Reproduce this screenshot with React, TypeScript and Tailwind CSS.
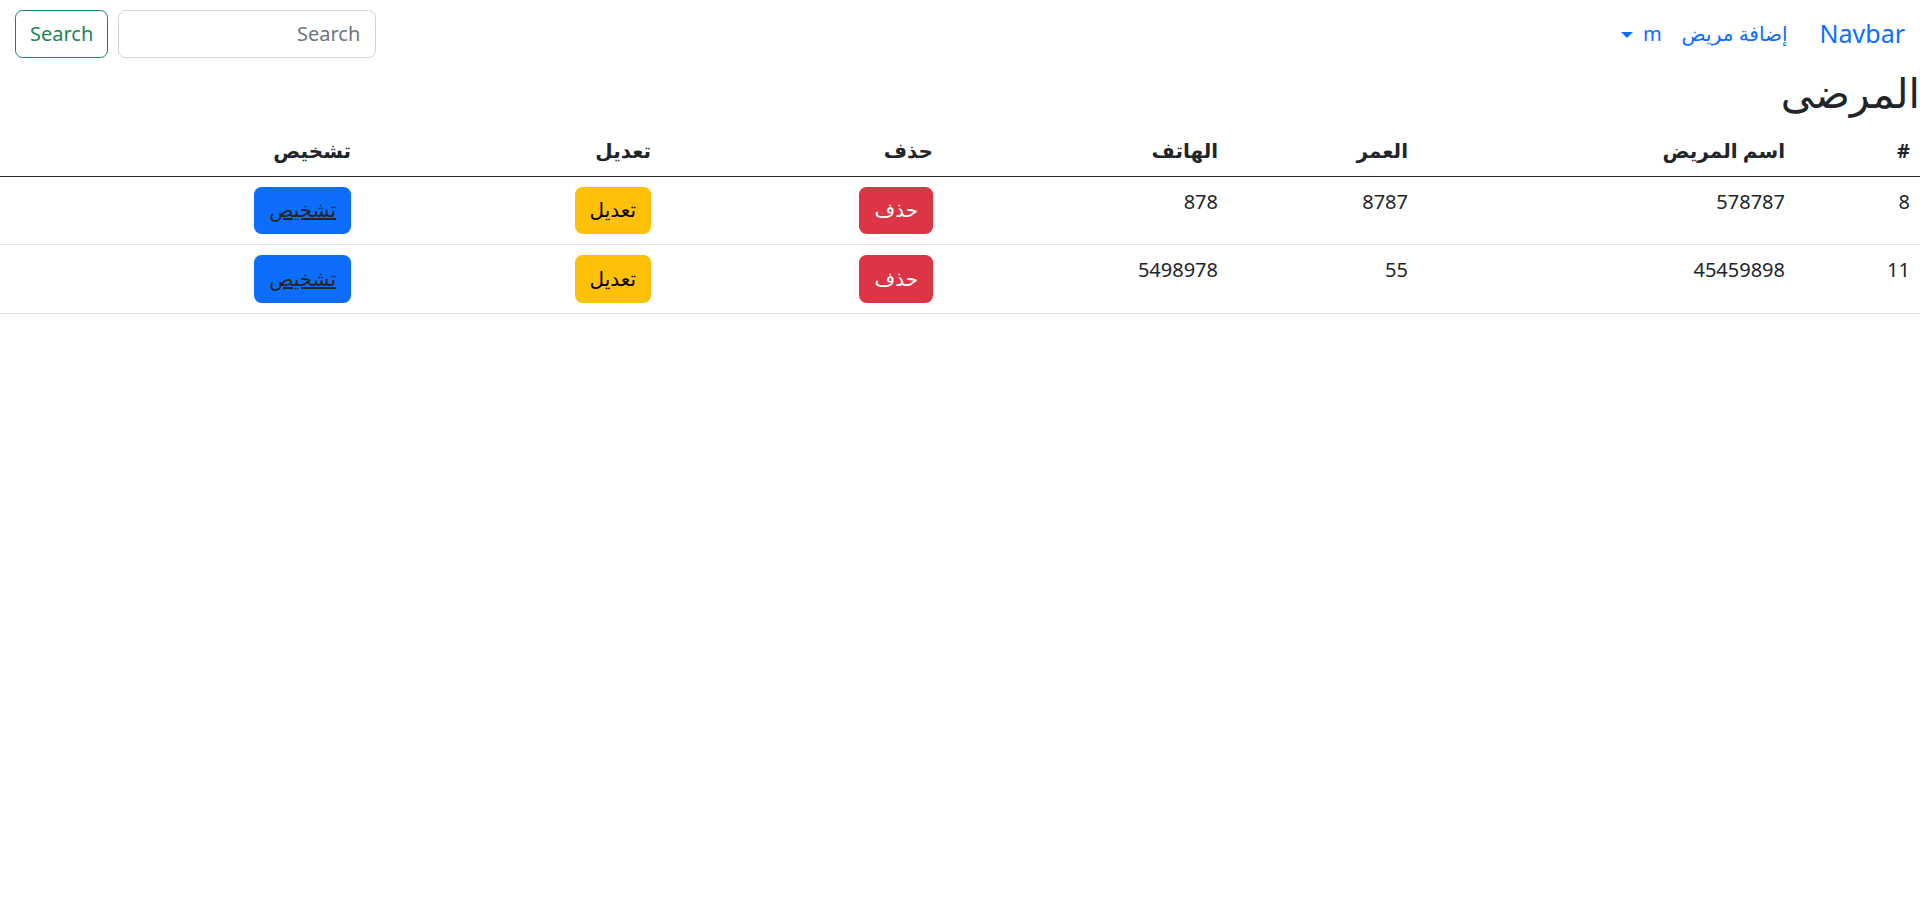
import React from "react";

type Patient = {
  id: number;
  name: string;
  age: string;
  phone: string;
};

const patients: Patient[] = [
  { id: 8, name: "578787", age: "8787", phone: "878" },
  { id: 11, name: "45459898", age: "55", phone: "5498978" },
];

const App: React.FC = () => {
  return (
    <div
      dir="rtl"
      className="min-h-screen bg-white text-[20px] leading-[1.5] text-[#212529] font-['Noto_Sans','DejaVu_Sans',sans-serif]"
    >
      {/* Navbar */}
      <nav className="flex items-center h-[67.5px] px-[15px]">
        <a href="#" className="text-[25px] leading-[1.5] text-[#0d6efd] ml-[22px]">
          Navbar
        </a>
        <ul className="flex items-center">
          <li>
            <a href="#" className="block px-[10px] text-[#0d6efd]">
              إضافة مريض
            </a>
          </li>
          <li>
            <a href="#" className="flex items-center gap-[10px] px-[10px] text-[#0d6efd]">
              m
              <span className="inline-block w-0 h-0 border-t-[6px] border-x-[6px] border-x-transparent border-t-[#0d6efd] mt-[2px]" />
            </a>
          </li>
        </ul>

        {/* Search form */}
        <form className="mr-auto flex items-center gap-[10px]" onSubmit={(e) => e.preventDefault()}>
          <input
            type="search"
            placeholder="Search"
            className="w-[258px] h-[47.5px] px-[15px] border border-[#ced4da] rounded-[7.5px] text-[20px] placeholder-[#6c757d] focus:outline-none"
          />
          <button
            type="submit"
            className="h-[47.5px] px-[14px] border border-[#198754] rounded-[7.5px] text-[#198754] text-[20px]"
          >
            Search
          </button>
        </form>
      </nav>

      <h2 className="h-[48px] text-[41px] leading-[48px] font-medium mb-[10px] overflow-visible">المرضى</h2>

      {/* Patients table */}
      <table className="w-full border-collapse text-right">
        <thead>
          <tr className="h-[50px] border-b border-[#212529] font-bold">
            <th className="w-[125px] px-[10px] py-[10px] align-top leading-[30px]">#</th>
            <th className="w-[377px] px-[10px] py-[10px] align-top leading-[30px]">اسم المريض</th>
            <th className="w-[190px] px-[10px] py-[10px] align-top leading-[30px]">العمر</th>
            <th className="w-[285px] px-[10px] py-[10px] align-top leading-[30px]">الهاتف</th>
            <th className="w-[282px] px-[10px] py-[10px] align-top leading-[30px]">حذف</th>
            <th className="w-[300px] px-[10px] py-[10px] align-top leading-[30px]">تعديل</th>
            <th className="px-[10px] py-[10px] align-top leading-[30px]">تشخيص</th>
          </tr>
        </thead>
        <tbody>
          {patients.map((p) => (
            <tr key={p.id} className="border-b border-[#dee2e6]">
              <td className="p-[10px] align-top leading-[30px]">{p.id}</td>
              <td className="p-[10px] align-top leading-[30px]">{p.name}</td>
              <td className="p-[10px] align-top leading-[30px]">{p.age}</td>
              <td className="p-[10px] align-top leading-[30px]">{p.phone}</td>
              <td className="p-[10px] align-top">
                <button className="h-[47.5px] px-[15px] rounded-[7.5px] bg-[#dc3545] text-white">حذف</button>
              </td>
              <td className="p-[10px] align-top">
                <button className="h-[47.5px] px-[15px] rounded-[7.5px] bg-[#ffc107] text-black">تعديل</button>
              </td>
              <td className="p-[10px] align-top">
                <button className="h-[47.5px] px-[15px] rounded-[7.5px] bg-[#0d6efd]">
                  <a href="#" className="text-[#212529] underline">
                    تشخيص
                  </a>
                </button>
              </td>
            </tr>
          ))}
        </tbody>
      </table>
    </div>
  );
};

export default App;
